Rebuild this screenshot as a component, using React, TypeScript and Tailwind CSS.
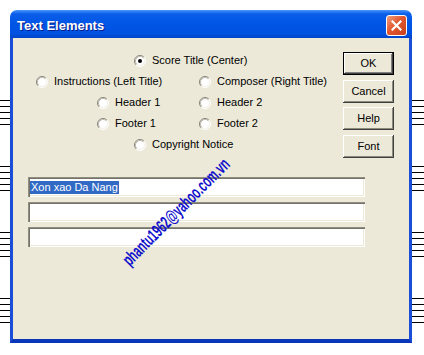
import React from "react";

function Staff() {
  return (
    <div className="flex flex-col gap-[5px]">
      <div className="h-px bg-black" />
      <div className="h-px bg-black" />
      <div className="h-px bg-black" />
      <div className="h-px bg-black" />
      <div className="h-px bg-black" />
    </div>
  );
}

function StaffColumn({ width }: { width: string }) {
  return (
    <div className={`${width} flex flex-col pt-[100px] gap-[41px]`}>
      <Staff />
      <Staff />
      <Staff />
      <Staff />
    </div>
  );
}

function RadioIcon({ checked }: { checked?: boolean }) {
  return (
    <svg width="12" height="12" viewBox="0 0 12 12" className="shrink-0">
      <circle cx="6" cy="6" r="5" fill="#fff" />
      <path d="M 2.11 9.89 A 5.5 5.5 0 0 1 9.89 2.11" fill="none" stroke="#85837a" strokeWidth="1" />
      <path d="M 9.89 2.11 A 5.5 5.5 0 0 1 2.11 9.89" fill="none" stroke="#ffffff" strokeWidth="1" />
      <path d="M 2.82 9.18 A 4.5 4.5 0 0 1 9.18 2.82" fill="none" stroke="#bcb9ae" strokeWidth="1" />
      <path d="M 9.18 2.82 A 4.5 4.5 0 0 1 2.82 9.18" fill="none" stroke="#f1f0ea" strokeWidth="1" />
      {checked && <circle cx="6" cy="6" r="2" fill="#000" />}
    </svg>
  );
}

function Radio({ label, checked, width }: { label: string; checked?: boolean; width?: string }) {
  return (
    <div className={`flex items-center gap-[6px] ${width ?? ""}`}>
      <RadioIcon checked={checked} />
      <span className="text-[11px] leading-none text-black whitespace-nowrap">{label}</span>
    </div>
  );
}

function Button({ label, isDefault }: { label: string; isDefault?: boolean }) {
  return (
    <div
      className={`w-[51px] h-[23px] flex items-center justify-center text-[11px] text-black bg-[#ECE9D8] ${
        isDefault
          ? "border border-black shadow-[inset_-1px_-1px_#404040,inset_1px_1px_#fff,inset_-2px_-2px_#808080]"
          : "shadow-[inset_-1px_-1px_#404040,inset_1px_1px_#fff,inset_-2px_-2px_#8d8a7e]"
      }`}
    >
      {label}
    </div>
  );
}

function Field({ children }: { children?: React.ReactNode }) {
  return (
    <div className="w-[337px] h-[20px] bg-white flex items-center pl-[2px] pt-px shadow-[inset_1px_1px_#8f8c80,inset_2px_2px_#75726a,inset_-1px_-1px_#fff,inset_-2px_-2px_#ECE9D8]">
      {children}
    </div>
  );
}

export default function App() {
  return (
    <div
      className="w-[424px] h-[355px] bg-white flex overflow-hidden"
      style={{ fontFamily: '"Liberation Sans", Arial, sans-serif' }}
    >
      <StaffColumn width="w-[10px]" />
      <div className="w-[402px] mt-[10px] h-[333px] flex flex-col">
        <div className="h-[28px] rounded-t-[7px] bg-[linear-gradient(180deg,#4a96fb_0%,#0a5ee9_14%,#0055e5_50%,#0052e0_85%,#0044c8_100%)] flex items-center justify-between pl-[7px] pr-[5px] pt-[3px]">
          <span className="text-white font-bold text-[13px] leading-none [text-shadow:1px_1px_#0a1b8a]">
            Text Elements
          </span>
          <div className="w-[21px] h-[21px] rounded-[3px] border border-white bg-[linear-gradient(135deg,#f0a080_0%,#e2572f_45%,#c8401a_100%)] flex items-center justify-center">
            <svg width="11" height="11" viewBox="0 0 11 11">
              <path d="M1.5 1.5 L9.5 9.5 M9.5 1.5 L1.5 9.5" stroke="#fff" strokeWidth="2.2" strokeLinecap="square" />
            </svg>
          </div>
        </div>
        <div className="flex-1 bg-[#ECE9D8] border-l-[3px] border-r-[3px] border-b-[4px] border-l-[#1a4ed6] border-r-[#1a4ed6] border-b-[#0a36b8] relative flex flex-col">
          <div className="h-[120px] flex">
            <div className="w-[330px] pt-[12px] flex flex-col">
              <div className="h-[21px] flex items-center pl-[121px]">
                <Radio label="Score Title (Center)" checked />
              </div>
              <div className="h-[21px] flex items-center pl-[23px]">
                <Radio label="Instructions (Left Title)" width="w-[163px]" />
                <Radio label="Composer (Right Title)" />
              </div>
              <div className="h-[21px] flex items-center pl-[84px]">
                <Radio label="Header 1" width="w-[102px]" />
                <Radio label="Header 2" />
              </div>
              <div className="h-[21px] flex items-center pl-[84px]">
                <Radio label="Footer 1" width="w-[102px]" />
                <Radio label="Footer 2" />
              </div>
              <div className="h-[21px] flex items-center pl-[121px]">
                <Radio label="Copyright Notice" />
              </div>
            </div>
            <div className="pt-[14px] flex flex-col gap-[4.5px]">
              <Button label="OK" isDefault />
              <Button label="Cancel" />
              <Button label="Help" />
              <Button label="Font" />
            </div>
          </div>
          <div className="mt-[19px] pl-[15px] flex flex-col gap-[5px]">
            <Field>
              <span className="bg-[#316AC5] text-white text-[11px] leading-[13px] px-px">Xon xao Da Nang</span>
            </Field>
            <Field />
            <Field />
          </div>
          <span className="absolute left-[163px] top-[174px] -translate-x-1/2 -translate-y-1/2 rotate-[-45deg] scale-x-[0.6] text-[18px] font-bold leading-none text-[#1010cc] whitespace-nowrap">
            phantu1962@yahoo.com.vn
          </span>
        </div>
      </div>
      <StaffColumn width="w-[12px]" />
    </div>
  );
}
